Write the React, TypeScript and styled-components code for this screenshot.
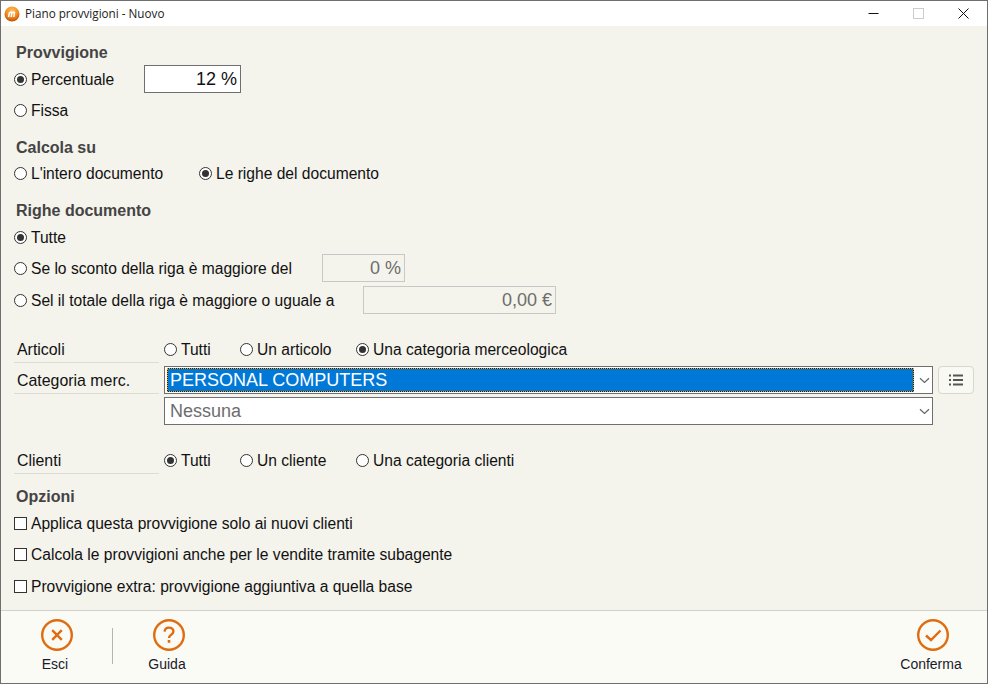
import React from 'react';
import styled, { createGlobalStyle } from 'styled-components';

const GlobalStyle = createGlobalStyle`
  html, body {
    margin: 0;
    padding: 0;
    background: #f4f3ec;
  }
  * {
    box-sizing: border-box;
  }
`;

const Window = styled.div`
  width: 988px;
  height: 684px;
  display: flex;
  flex-direction: column;
  border: 1px solid #6f6f6f;
  background: #f4f3ec;
  font-family: "Liberation Sans", Arial, sans-serif;
  font-size: 15.6px;
  color: #111;
  overflow: hidden;
`;

const TitleBar = styled.div`
  height: 25px;
  flex: none;
  display: flex;
  align-items: center;
  padding-left: 3px;
  background: #fff;
`;

const TitleText = styled.span`
  margin-left: 5px;
  padding-bottom: 2px;
  font-family: "Open Sans", sans-serif;
  font-size: 11.7px;
  color: #222;
`;

const WindowControls = styled.div`
  margin-left: auto;
  display: flex;
  align-items: center;
  margin-right: 1px;
`;

const WindowButton = styled.div`
  width: 45px;
  height: 25px;
  padding-bottom: 1px;
  display: flex;
  align-items: center;
  justify-content: center;
`;

const Content = styled.div`
  flex: 1;
  padding: 17px 13px 0;
`;

const Heading = styled.div<{ $top?: number }>`
  height: 20px;
  line-height: 20px;
  margin-top: ${({ $top }) => $top ?? 0}px;
  padding-left: 2px;
  font-size: 16px;
  font-weight: 700;
  color: #444;
`;

const Row = styled.div<{ $height?: number }>`
  height: ${({ $height }) => $height ?? 31}px;
  display: flex;
  align-items: center;
`;

const OptionLabel = styled.label<{ $width?: number }>`
  display: flex;
  align-items: center;
  gap: 4px;
  flex: none;
  white-space: nowrap;
  width: ${({ $width }) => ($width ? `${$width}px` : 'auto')};
`;

const OptionText = styled.span`
  padding-top: 1px;
`;

const RadioMark = styled.span<{ $checked?: boolean }>`
  width: 13px;
  height: 13px;
  flex: none;
  border-radius: 50%;
  border: 1px solid #333;
  background: #fff;
  display: flex;
  align-items: center;
  justify-content: center;

  &::after {
    content: '';
    display: ${({ $checked }) => ($checked ? 'block' : 'none')};
    width: 7px;
    height: 7px;
    border-radius: 50%;
    background: #333;
  }
`;

const CheckMark = styled.span`
  width: 13px;
  height: 13px;
  flex: none;
  border: 1px solid #333;
  background: #fff;
`;

const ValueBox = styled.div<{ $width: number; $disabled?: boolean }>`
  width: ${({ $width }) => $width}px;
  height: 28px;
  flex: none;
  display: flex;
  align-items: center;
  justify-content: flex-end;
  padding-right: 3px;
  font-size: 18px;
  border: 1px solid ${({ $disabled }) => ($disabled ? '#c8c8c8' : '#6f6f6f')};
  background: ${({ $disabled }) => ($disabled ? 'transparent' : '#fff')};
  color: ${({ $disabled }) => ($disabled ? '#6d6d6d' : '#111')};
`;

const FieldLine = styled.div<{ $top?: number }>`
  display: flex;
  align-items: flex-start;
  height: 31px;
  margin-top: ${({ $top }) => $top ?? 0}px;
`;

const FieldName = styled.div`
  width: 145px;
  height: 100%;
  flex: none;
  padding: 4px 0 0 3px;
  line-height: 27px;
  font-size: 15.9px;
  border-bottom: 1px solid #dcdcd4;
`;

const FieldBody = styled.div`
  margin: 3px 0 0 5px;
  display: flex;
  align-items: center;
  height: 28px;
`;

const SelectBox = styled.div`
  width: 769px;
  height: 28px;
  display: flex;
  align-items: center;
  padding: 2px;
  border: 1px solid #6f6f6f;
  background: #fff;
  font-size: 18px;
  color: #6d6d6d;
`;

const SelectValue = styled.div<{ $selected?: boolean }>`
  flex: 1;
  height: 100%;
  padding-left: 2px;
  margin-left: 1px;
  line-height: 22px;
  color: ${({ $selected }) => ($selected ? '#fff' : '#6d6d6d')};
  background: ${({ $selected }) => ($selected ? '#0078d7' : 'transparent')};
  box-shadow: ${({ $selected }) => ($selected ? '0 0 0 1px #222' : 'none')};
  outline: ${({ $selected }) => ($selected ? '1px dotted #f0a020' : 'none')};
`;

const SelectArrow = styled.div`
  width: 17px;
  flex: none;
  display: flex;
  justify-content: flex-end;
`;

const ListButton = styled.div`
  width: 36px;
  height: 28px;
  margin-left: 5px;
  flex: none;
  display: flex;
  align-items: center;
  justify-content: center;
  border: 1px solid #d8d8ce;
  border-radius: 4px;
  background: #f9f9f4;
`;

const SecondSelect = styled.div`
  margin: 3px 0 0 150px;
`;

const RadioGroup = styled.div`
  display: flex;
  align-items: center;
`;

const Footer = styled.div`
  height: 73px;
  flex: none;
  display: flex;
  align-items: flex-start;
  padding: 8px 0 0 19px;
  border-top: 1px solid #d2d2ca;
  background: #fbfbf6;
`;

const FooterButton = styled.div<{ $right?: boolean }>`
  width: 70px;
  display: flex;
  flex-direction: column;
  align-items: center;
  gap: 5px;
  font-size: 14px;
  color: #1a1a2a;
  margin-left: ${({ $right }) => ($right ? 'auto' : '0')};
  margin-right: ${({ $right }) => ($right ? '21px' : '0')};
`;

const FooterIcon = styled.svg`
  display: block;
  margin-left: 3px;
`;

const FooterSeparator = styled.div`
  width: 1px;
  height: 36px;
  margin: 9px 19px 0 22px;
  background: #b4b4b0;
`;

const ORANGE = '#e06c10';

const AppIcon = () => (
  <svg width="16" height="16" viewBox="0 0 16 16">
    <defs>
      <radialGradient id="logo" cx="50%" cy="30%" r="70%">
        <stop offset="0%" stopColor="#ffc060" />
        <stop offset="60%" stopColor="#f28a1c" />
        <stop offset="100%" stopColor="#b9500c" />
      </radialGradient>
    </defs>
    <circle cx="8" cy="8" r="7.5" fill="url(#logo)" />
    <path d="M4.5 11 L5.5 6.5 M5.5 7 Q8 5 7.8 7 L7.2 11 M8 7 Q10.8 5 10.4 7 L9.8 11" fill="none" stroke="#fff" strokeWidth="1.5" />
  </svg>
);

const Chevron = () => (
  <svg width="11" height="7" viewBox="0 0 11 7">
    <path d="M1 1.2 L5.5 5.5 L10 1.2" fill="none" stroke="#666" strokeWidth="1.2" />
  </svg>
);

const ListIcon = () => (
  <svg width="14" height="12" viewBox="0 0 14 12">
    <g fill="#555">
      <rect x="0" y="0.5" width="2" height="2" />
      <rect x="0" y="5" width="2" height="2" />
      <rect x="0" y="9.5" width="2" height="2" />
      <rect x="4" y="0.5" width="10" height="2" />
      <rect x="4" y="5" width="10" height="2" />
      <rect x="4" y="9.5" width="10" height="2" />
    </g>
  </svg>
);

const Circle = () => <circle cx="16" cy="16" r="14.8" fill="none" stroke={ORANGE} strokeWidth="2.4" />;

const ExitIcon = () => (
  <FooterIcon width="32" height="32" viewBox="0 0 32 32">
    <Circle />
    <path d="M11.2 11.2 L20.8 20.8 M20.8 11.2 L11.2 20.8" stroke={ORANGE} strokeWidth="2.4" fill="none" />
  </FooterIcon>
);

const HelpIcon = () => (
  <FooterIcon width="32" height="32" viewBox="0 0 32 32">
    <Circle />
    <path d="M11.6 12.6 C11.8 9.8 13.6 8.6 16 8.6 C18.6 8.6 20.4 10.2 20.4 12.4 C20.4 15.6 16 15.6 16 19" stroke={ORANGE} strokeWidth="2.4" fill="none" />
    <rect x="14.7" y="21" width="2.6" height="2.8" fill={ORANGE} />
  </FooterIcon>
);

const ConfirmIcon = () => (
  <FooterIcon width="32" height="32" viewBox="0 0 32 32">
    <Circle />
    <path d="M9 16.5 L14 21 L23.5 11.5" stroke={ORANGE} strokeWidth="2.4" fill="none" />
  </FooterIcon>
);

const Radio = ({ label, checked, width }: { label: string; checked?: boolean; width?: number }) => (
  <OptionLabel $width={width}>
    <RadioMark $checked={checked} />
    <OptionText>{label}</OptionText>
  </OptionLabel>
);

const Check = ({ label }: { label: string }) => (
  <OptionLabel>
    <CheckMark />
    <OptionText>{label}</OptionText>
  </OptionLabel>
);

export default function App() {
  return (
    <>
      <GlobalStyle />
      <Window>
        <TitleBar>
          <AppIcon />
          <TitleText>Piano provvigioni - Nuovo</TitleText>
          <WindowControls>
            <WindowButton>
              <svg width="11" height="11" viewBox="0 0 11 11">
                <rect x="0.5" y="5" width="10" height="1" fill="#111" />
              </svg>
            </WindowButton>
            <WindowButton>
              <svg width="11" height="11" viewBox="0 0 11 11">
                <rect x="0.5" y="0.5" width="10" height="10" fill="none" stroke="#ccc" />
              </svg>
            </WindowButton>
            <WindowButton>
              <svg width="11" height="11" viewBox="0 0 11 11">
                <path d="M0.5 0.5 L10.5 10.5 M10.5 0.5 L0.5 10.5" stroke="#111" strokeWidth="1" fill="none" />
              </svg>
            </WindowButton>
          </WindowControls>
        </TitleBar>

        <Content>
          <Heading>Provvigione</Heading>
          <Row $height={32}>
            <Radio label="Percentuale" checked width={130} />
            <ValueBox $width={97}>12 %</ValueBox>
          </Row>
          <Row>
            <Radio label="Fissa" />
          </Row>

          <Heading $top={12}>Calcola su</Heading>
          <Row $height={30}>
            <Radio label="L'intero documento" width={185} />
            <Radio label="Le righe del documento" checked />
          </Row>

          <Heading $top={13}>Righe documento</Heading>
          <Row $height={32}>
            <Radio label="Tutte" checked />
          </Row>
          <Row $height={30}>
            <Radio label="Se lo sconto della riga è maggiore del" width={308} />
            <ValueBox $width={83} $disabled>0 %</ValueBox>
          </Row>
          <Row $height={34}>
            <Radio label="Sel il totale della riga è maggiore o uguale a" width={349} />
            <ValueBox $width={193} $disabled>0,00 €</ValueBox>
          </Row>

          <FieldLine $top={15}>
            <FieldName>Articoli</FieldName>
            <FieldBody>
              <RadioGroup>
                <Radio label="Tutti" width={76} />
                <Radio label="Un articolo" width={116} />
                <Radio label="Una categoria merceologica" checked />
              </RadioGroup>
            </FieldBody>
          </FieldLine>
          <FieldLine>
            <FieldName>Categoria merc.</FieldName>
            <FieldBody>
              <SelectBox>
                <SelectValue $selected>PERSONAL COMPUTERS</SelectValue>
                <SelectArrow><Chevron /></SelectArrow>
              </SelectBox>
              <ListButton><ListIcon /></ListButton>
            </FieldBody>
          </FieldLine>
          <SecondSelect>
            <SelectBox>
              <SelectValue>Nessuna</SelectValue>
              <SelectArrow><Chevron /></SelectArrow>
            </SelectBox>
          </SecondSelect>

          <FieldLine $top={18}>
            <FieldName>Clienti</FieldName>
            <FieldBody>
              <RadioGroup>
                <Radio label="Tutti" checked width={76} />
                <Radio label="Un cliente" width={116} />
                <Radio label="Una categoria clienti" />
              </RadioGroup>
            </FieldBody>
          </FieldLine>

          <Heading $top={13}>Opzioni</Heading>
          <Row $height={32}>
            <Check label="Applica questa provvigione solo ai nuovi clienti" />
          </Row>
          <Row>
            <Check label="Calcola le provvigioni anche per le vendite tramite subagente" />
          </Row>
          <Row $height={32}>
            <Check label="Provvigione extra: provvigione aggiuntiva a quella base" />
          </Row>
        </Content>

        <Footer>
          <FooterButton>
            <ExitIcon />
            Esci
          </FooterButton>
          <FooterSeparator />
          <FooterButton>
            <HelpIcon />
            Guida
          </FooterButton>
          <FooterButton $right>
            <ConfirmIcon />
            Conferma
          </FooterButton>
        </Footer>
      </Window>
    </>
  );
}
